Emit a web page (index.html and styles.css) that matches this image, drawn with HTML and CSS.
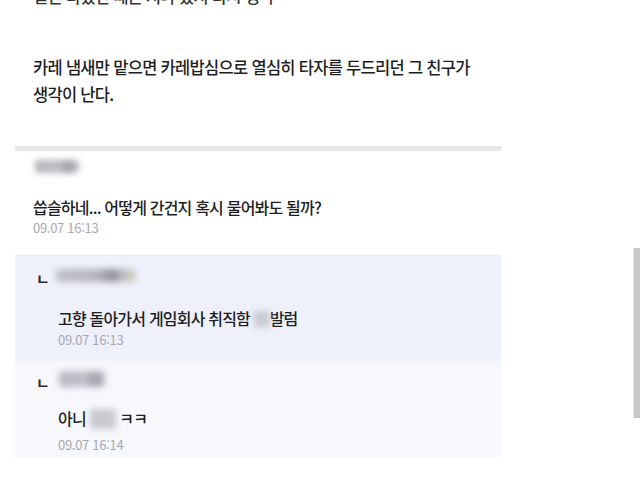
FILE: index.html
```html
<!DOCTYPE html>
<html lang="ko">
<head>
<meta charset="utf-8">
<link rel="stylesheet" href="styles.css">
</head>
<body>
<div class="page">
  <div class="article">
    <p class="cut">일단 다했던 때는 지나 갔지 다시 생각</p>
    <p class="body-text">카레 냄새만 맡으면 카레밥심으로 열심히 타자를 두드리던 그 친구가<br>생각이 난다.</p>
  </div>
  <div class="divider"></div>
  <div class="comments">
    <div class="comment">
      <div class="name"><span class="blur n1"></span></div>
      <div class="text">씁슬하네... 어떻게 간건지 혹시 물어봐도 될까?</div>
      <div class="time">09.07 16:13</div>
    </div>
    <div class="reply reply-a">
      <div class="name"><span class="mark">ㄴ</span><span class="blur n2"></span></div>
      <div class="text">고향 돌아가서 게임회사 취직함 <span class="blur-box"></span>발럼</div>
      <div class="time">09.07 16:13</div>
    </div>
    <div class="reply reply-b">
      <div class="name"><span class="mark">ㄴ</span><span class="blur n3"></span></div>
      <div class="text">아니 <span class="blur-box big"></span> ㅋㅋ</div>
      <div class="time">09.07 16:14</div>
    </div>
  </div>
  <div class="scrollbar"></div>
</div>
</body>
</html>
```
FILE: styles.css
```css
html, body {
  margin: 0;
  padding: 0;
  background: #ffffff;
}
body {
  font-family: "Noto Sans CJK KR", "Noto Sans", sans-serif;
  color: #222;
  width: 640px;
  height: 500px;
  overflow: hidden;
}
.page {
  position: relative;
  width: 640px;
  height: 500px;
}
.article {
  padding: 0 0 0 33px;
}
.cut {
  margin: -14px 0 0 0;
  font-size: 16.5px;
  line-height: 20px;
  color: #333;
  letter-spacing: -0.7px;
  font-weight: 500;
}
.body-text {
  margin: 48px 0 0 0;
  font-size: 16.5px;
  line-height: 27px;
  letter-spacing: -0.7px;
  color: #1e1e1e;
  font-weight: 500;
}
.divider {
  margin: 38px 139px 0 15px;
  height: 5px;
  background: #e8e8ec;
}
.comments {
  margin: 0 139px 0 15px;
}
.comment {
  padding: 3px 18px 18px;
  background: #fff;
  border-bottom: 1px solid #e9ebf6;
}
.reply {
  padding: 7px 18px 10px 20px;
}
.reply-a {
  background: #eef0fb;
  border-bottom: 4px solid #f4f5fa;
}
.reply-b {
  background: #f7f8fc;
  padding-top: 4px;
  padding-bottom: 4px;
}
.name {
  display: flex;
  align-items: center;
  height: 24px;
}
.blur {
  display: inline-block;
  height: 13px;
  border-radius: 4px;
  filter: blur(3px);
}
.n1 {
  width: 44px;
  margin-left: 2px;
  background: linear-gradient(90deg, #b3b3b8 0%, #bdbdc2 55%, #9a9aa0 75%, #c4c4c8 100%);
}
.n2 {
  width: 80px;
  background: linear-gradient(90deg, #bfc0c8 0%, #b4b5bd 50%, #8f9098 72%, #b8b9c0 82%, #d6d2bf 100%);
}
.n3 {
  width: 46px;
  height: 16px;
  margin-left: 3px;
  background: linear-gradient(90deg, #b8b9c0 0%, #c0c1c8 55%, #a2a3aa 78%, #bcbdc4 100%);
}
.mark {
  font-size: 15px;
  line-height: 16px;
  font-weight: 700;
  color: #2a2a35;
  width: 20px;
  padding-top: 8px;
  margin-left: 1px;
}
.reply .text, .reply .time {
  padding-left: 23px;
}
.text {
  margin-top: 17px;
  font-size: 16px;
  line-height: 24px;
  letter-spacing: -0.8px;
  color: #1e1e1e;
  font-weight: 500;
}
.time {
  margin-top: 0;
  font-size: 13px;
  line-height: 18px;
  color: #a8a8ae;
  letter-spacing: -0.3px;
}
.reply-a .text {
  margin-top: 19px;
}
.reply-a .time {
  margin-top: 1px;
}
.reply-b .text {
  margin-top: 15px;
}
.reply-b .time {
  margin-top: 6px;
}
.blur-box {
  display: inline-block;
  width: 16px;
  height: 16px;
  vertical-align: -2px;
  background: #c9cad0;
  filter: blur(3px);
}
.blur-box.big {
  width: 26px;
  height: 20px;
  vertical-align: -4px;
}
.scrollbar {
  position: absolute;
  left: 633px;
  top: 262px;
  width: 6px;
  height: 170px;
  background: #c9c9c9;
  border-left: 1px solid #e4e4e4;
}
```
